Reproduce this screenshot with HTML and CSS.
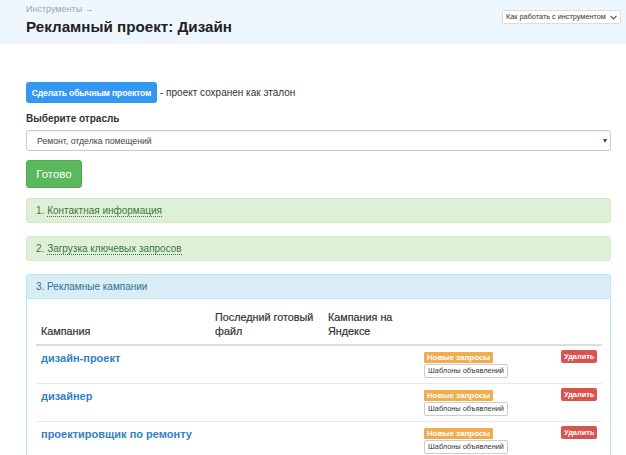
FILE: index.html
```html
<!DOCTYPE html>
<html lang="ru">
<head>
<meta charset="utf-8">
<title>Рекламный проект: Дизайн</title>
<link rel="stylesheet" href="styles.css">
</head>
<body>
<header class="top">
  <div class="top-left">
    <div class="crumbs">Инструменты →</div>
    <h1 class="title">Рекламный проект: Дизайн</h1>
  </div>
  <div class="howto"><span>Как работать с инструментом</span>
    <svg class="chev" width="7" height="5" viewBox="0 0 7 5"><path d="M0.5 0.8 L3.5 3.8 L6.5 0.8" fill="none" stroke="#555" stroke-width="1.2"/></svg>
  </div>
</header>
<main class="main">
  <div class="actions">
    <span class="btn btn-blue">Сделать обычным проектом</span>
    <span class="note">- проект сохранен как эталон</span>
  </div>
  <div class="label">Выберите отрасль</div>
  <div class="select">
    <span>Ремонт, отделка помещений</span>
    <span class="caret">▾</span>
  </div>
  <span class="btn btn-green">Готово</span>

  <div class="panel panel-green">
    <div class="panel-head">1. <span class="dlink">Контактная информация</span></div>
  </div>
  <div class="panel panel-green">
    <div class="panel-head">2. <span class="dlink">Загрузка ключевых запросов</span></div>
  </div>
  <div class="panel panel-blue">
    <div class="panel-head">3. Рекламные кампании</div>
    <div class="panel-body">
      <table class="tbl">
        <colgroup>
          <col class="c1"><col class="c2"><col class="c3"><col class="c4"><col class="c5">
        </colgroup>
        <thead>
          <tr><th>Кампания</th><th>Последний готовый файл</th><th>Кампания на Яндексе</th><th></th><th></th></tr>
        </thead>
        <tbody>
          <tr>
            <td><a class="camp">дизайн-проект</a></td><td></td><td></td>
            <td class="tags"><span class="tag-orange">Новые запросы</span><br><span class="tag-white">Шаблоны объявлений</span></td>
            <td class="right"><span class="tag-red">Удалить</span></td>
          </tr>
          <tr>
            <td><a class="camp">дизайнер</a></td><td></td><td></td>
            <td class="tags"><span class="tag-orange">Новые запросы</span><br><span class="tag-white">Шаблоны объявлений</span></td>
            <td class="right"><span class="tag-red">Удалить</span></td>
          </tr>
          <tr>
            <td><a class="camp">проектировщик по ремонту</a></td><td></td><td></td>
            <td class="tags"><span class="tag-orange">Новые запросы</span><br><span class="tag-white">Шаблоны объявлений</span></td>
            <td class="right"><span class="tag-red">Удалить</span></td>
          </tr>
        </tbody>
      </table>
    </div>
  </div>
</main>
</body>
</html>
```

FILE: styles.css
```css
* { box-sizing: border-box; }
html, body { margin: 0; padding: 0; background: #fff; }
body {
  font-family: "Liberation Sans", Arial, sans-serif;
  color: #333;
  width: 626px;
  height: 455px;
  overflow: hidden;
}
.top {
  background: #eef6fe;
  height: 44px;
  display: flex;
  justify-content: space-between;
  align-items: flex-start;
  padding: 0 5px 0 26px;
}
.top-left { display: flex; flex-direction: column; }
.crumbs {
  font-size: 9px;
  color: #a3a3a3;
  margin-top: 4px;
  line-height: 10px;
}
.title {
  margin: 3px 0 0 0;
  font-size: 15.2px;
  font-weight: bold;
  color: #222;
  line-height: 20px;
}
.howto {
  margin-top: 10px;
  height: 14px;
  width: 119px;
  background: #fff;
  border: 1px solid #dcdcdc;
  border-radius: 2px;
  font-size: 7.3px;
  color: #333;
  line-height: 12px;
  padding: 0 3px 0 3px;
  display: flex;
  align-items: center;
  justify-content: space-between;
  white-space: nowrap;
}
.chev { margin-left: 2px; flex: none; }

.main { padding: 0 15px 0 26px; }
.actions {
  margin-top: 38px;
  display: flex;
  align-items: center;
  height: 21px;
}
.btn {
  display: inline-flex;
  align-items: center;
  justify-content: center;
  color: #fff;
  border-radius: 3px;
  white-space: nowrap;
}
.btn-blue {
  background: #3498f2;
  height: 21px;
  width: 131px;
  font-size: 8.6px;
  font-weight: bold;
  letter-spacing: -0.15px;
}
.note {
  font-size: 10px;
  color: #333;
  margin-left: 3px;
}
.label {
  margin-top: 9px;
  font-size: 10px;
  font-weight: bold;
  color: #333;
  line-height: 13px;
}
.select {
  margin-top: 5px;
  height: 21px;
  border: 1px solid #ccc;
  border-radius: 3px;
  display: flex;
  align-items: center;
  justify-content: space-between;
  padding: 0 3px 0 10px;
  font-size: 8.7px;
  color: #444;
  box-shadow: inset 0 1px 1px rgba(0,0,0,0.06);
}
.caret { font-size: 8px; color: #444; }
.btn-green {
  margin-top: 9px;
  background: #5cb85c;
  border: 1px solid #4cae4c;
  height: 28px;
  width: 56px;
  font-size: 11.5px;
}
.panel {
  border-radius: 3px;
  border: 1px solid #d6e9c6;
  margin-top: 10px;
}
.panel + .panel { margin-top: 13px; }
.panel-green { background: #dff0d8; }
.panel-head {
  height: 23px;
  display: flex;
  align-items: center;
  padding: 0 9px;
  font-size: 10px;
  white-space: pre;
}
.panel-green .panel-head { color: #3c763d; }
.dlink {
  color: #3c763d;
  border-bottom: 1px dotted #3c763d;
  line-height: 11px;
}
.panel-blue {
  border-color: #bce8f1;
  border-bottom: none;
  border-radius: 3px 3px 0 0;
  height: 200px;
}
.panel-blue .panel-head {
  background: #d9edf7;
  color: #31708f;
  border-bottom: 1px solid #bce8f1;
  height: 24px;
}
.panel-body { padding: 6px 9px 0 9px; }
.tbl {
  width: 566px;
  border-collapse: collapse;
  table-layout: fixed;
}
.c1 { width: 174px; }
.c2 { width: 113px; }
.c3 { width: 96px; }
.c4 { width: 137px; }
.c5 { width: 46px; }
.tbl th {
  text-align: left;
  vertical-align: bottom;
  font-size: 10.8px;
  font-weight: normal;
  -webkit-text-stroke: 0.2px #333;
  color: #333;
  line-height: 14px;
  padding: 5px 5px 6px 5px;
  border-bottom: 2px solid #ddd;
}
.tbl td {
  vertical-align: top;
  padding: 5px 5px 0 5px;
  height: 38px;
  border-top: 1px solid #e9e9e9;
  line-height: 12px;
}
.tbl tbody tr:first-child td { border-top: none; }
.tbl td.tags {
  font-size: 8px;
  line-height: 11px;
  padding-top: 6px;
}
.tbl td.right {
  text-align: right;
  padding-right: 5px;
  padding-top: 4px;
  font-size: 8px;
  line-height: 13px;
}
.camp {
  display: inline-block;
  font-size: 11px;
  font-weight: bold;
  color: #3280c8;
  line-height: 13px;
  white-space: nowrap;
}
.tag-orange {
  display: inline-block;
  vertical-align: top;
  background: #f0ad4e;
  color: #fff;
  font-size: 8px;
  font-weight: bold;
  line-height: 11px;
  height: 11px;
  padding: 0 3px;
  border-radius: 1px;
}
.tag-white {
  display: inline-block;
  vertical-align: top;
  margin-top: 1px;
  background: #fff;
  color: #333;
  font-size: 7.4px;
  border: 1px solid #ccc;
  border-radius: 2px;
  height: 14px;
  line-height: 12px;
  padding: 0 3px;
}
.tag-red {
  display: inline-block;
  vertical-align: top;
  background: #d9534f;
  color: #fff;
  font-size: 7.4px;
  font-weight: bold;
  height: 13px;
  line-height: 13px;
  padding: 0 3px;
  border-radius: 2px;
}
```
